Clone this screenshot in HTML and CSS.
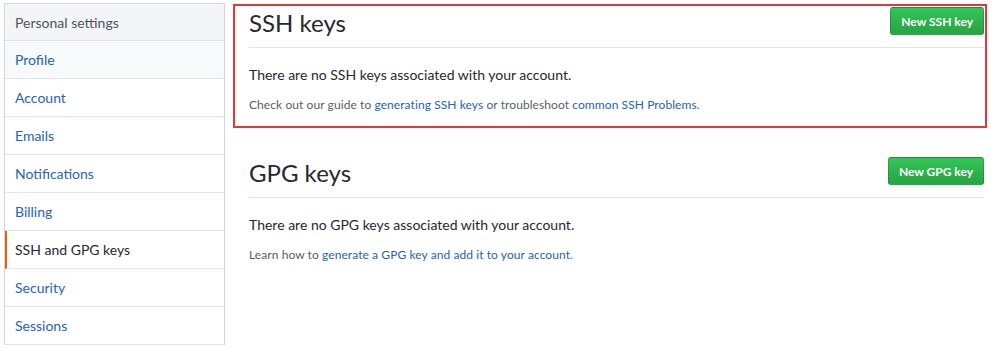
FILE: index.html
```html
<!DOCTYPE html>
<html>
<head>
<meta charset="utf-8">
<link rel="stylesheet" href="styles.css">
</head>
<body>
<div class="page">
  <nav class="menu">
    <div class="menu-heading">Personal settings</div>
    <a class="menu-item hover" href="#">Profile</a>
    <a class="menu-item" href="#">Account</a>
    <a class="menu-item" href="#">Emails</a>
    <a class="menu-item" href="#">Notifications</a>
    <a class="menu-item" href="#">Billing</a>
    <a class="menu-item selected" href="#">SSH and GPG keys</a>
    <a class="menu-item" href="#">Security</a>
    <a class="menu-item" href="#">Sessions</a>
  </nav>
  <main class="content">
    <section class="keys highlighted">
      <div class="subhead">
        <h2 class="subhead-heading">SSH keys</h2>
        <a class="btn" href="#">New SSH key</a>
      </div>
      <p class="blank">There are no SSH keys associated with your account.</p>
      <p class="note">Check out our guide to <a href="#">generating SSH keys</a> or troubleshoot <a href="#">common SSH Problems</a>.</p>
    </section>
    <section class="keys">
      <div class="subhead">
        <h2 class="subhead-heading">GPG keys</h2>
        <a class="btn" href="#">New GPG key</a>
      </div>
      <p class="blank">There are no GPG keys associated with your account.</p>
      <p class="note">Learn how to <a href="#">generate a GPG key and add it to your account</a>.</p>
    </section>
  </main>
</div>
</body>
</html>
```

FILE: styles.css
```css
* { box-sizing: border-box; }
html, body { margin: 0; background: #fff; }
body {
  font-family: Lato, "Liberation Sans", sans-serif;
  color: #24292e;
}
a { text-decoration: none; color: #2562bb; }

.page {
  display: flex;
  align-items: flex-start;
  padding: 3px 11px 0 4px;
  gap: 24px;
}

.menu {
  width: 221px;
  flex: none;
  border: 1px solid #d1d5da;
  border-bottom: none;
  display: flex;
  flex-direction: column;
}
.menu-heading {
  height: 37px;
  display: flex;
  align-items: center;
  padding-left: 10px;
  background: #f3f5f8;
  border-bottom: 1px solid #e1e4e8;
  font-size: 14px;
  color: #4d555e;
}
.menu-item {
  height: 38px;
  display: flex;
  align-items: center;
  padding-left: 10px;
  border-bottom: 1px solid #e1e4e8;
  font-size: 14px;
}
.menu-item.hover { background: #f8f9fb; }
.menu-item.selected {
  color: #24292e;
  border-left: 2px solid #e36209;
  padding-left: 8px;
}

.content {
  flex: 1;
  padding-top: 4px;
  display: flex;
  flex-direction: column;
  gap: 43px;
}

.keys { position: relative; }
.highlighted::after {
  content: "";
  position: absolute;
  left: -16px;
  right: -3px;
  top: -3px;
  height: 120px;
  border: 2px solid #e0373d;
}

.subhead {
  display: flex;
  justify-content: space-between;
  align-items: flex-start;
  border-bottom: 1px solid #e1e4e8;
  padding-bottom: 9px;
}
.subhead-heading {
  margin: 1px 0 0;
  font-size: 24px;
  line-height: 30px;
  font-weight: 400;
}
.btn {
  height: 28px;
  display: flex;
  align-items: center;
  padding: 0 10px;
  border-radius: 3px;
  border: 1px solid rgba(27, 31, 35, 0.2);
  background: linear-gradient(#34c659, #28a745 90%);
  color: #fff;
  font-size: 12px;
  font-weight: 700;
}

.blank {
  margin: 17px 0 0;
  font-size: 14px;
  line-height: 20px;
}
.note {
  margin: 11px 0 0;
  font-size: 12px;
  line-height: 18px;
  letter-spacing: 0.08px;
  color: #586069;
}
```
